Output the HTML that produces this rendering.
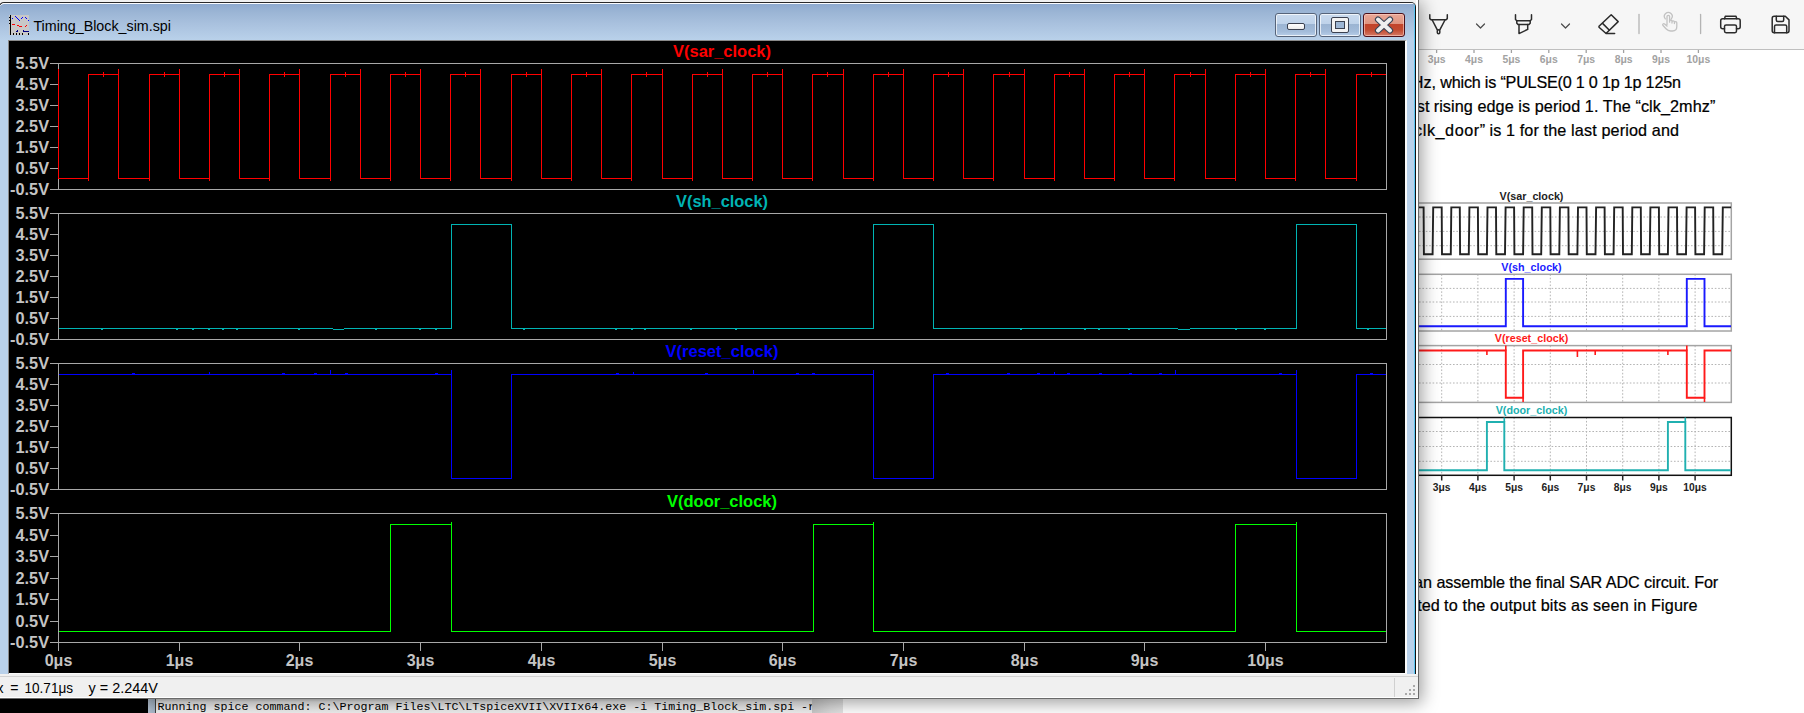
<!DOCTYPE html>
<html><head><meta charset="utf-8"><title>LTspice</title>
<style>
*{margin:0;padding:0;box-sizing:border-box}
html,body{width:1804px;height:713px;overflow:hidden;background:#fff;position:relative;font-family:"Liberation Sans",sans-serif}
.abs{position:absolute}
#tb{left:0;top:0;width:1804px;height:50px;background:#f6f6f6;border-bottom:1px solid #bfbfbf}
.ft{font:bold 10.75px "Liberation Sans",sans-serif;text-anchor:middle}
.fx{font:bold 10.3px "Liberation Sans",sans-serif;text-anchor:middle;fill:#1e1e1e}
.rl{font:bold 10.4px "Liberation Sans",sans-serif;fill:#a2a2a2;text-anchor:middle}
.dt{font:16.2px "Liberation Sans",sans-serif;fill:#000;stroke:#000;stroke-width:.22px}
.yl{font:bold 16.3px "Liberation Sans",sans-serif;fill:#c4c4c4;text-anchor:end}
.xl{font:bold 16px "Liberation Sans",sans-serif;fill:#c4c4c4;text-anchor:middle}
.tl{font:bold 16.7px "Liberation Sans",sans-serif;text-anchor:middle}
.btn{position:absolute;top:10px;width:42px;height:24px;border:1px solid #56647a;border-radius:3px;background:linear-gradient(#c9daee 0,#bfd3ea 44%,#9bb4d2 46%,#a3bcda 80%,#b7cee8 100%);box-shadow:inset 0 0 0 1px rgba(255,255,255,.7)}
#bclose{background:linear-gradient(#eaa897 0,#df9480 44%,#c2432a 46%,#c24a30 72%,#d57a66 100%);border-color:#4c1019;box-shadow:inset 0 0 0 1px rgba(255,210,200,.6)}
</style></head><body>
<div id="tb" class="abs"></div>
<svg class="abs" style="left:0;top:0" width="1804" height="50" viewBox="0 0 1804 50" fill="none" stroke="#2b2b2b" stroke-width="1.5" stroke-linecap="round" stroke-linejoin="round">
<path d="M1429.8 14.8V18.6L1431 19.8H1446.1L1447.3 18.6V14.8"/><path d="M1432.2 20L1437.3 29.8M1445 20L1439.8 29.8"/><rect x="1437.3" y="29.8" width="2.5" height="4" rx="1.2"/>
<path d="M1476.5 24L1480.5 28L1484.5 24" stroke="#4a4a4a" stroke-width="1.2"/>
<path d="M1515.5 14.8V19.5L1516.8 20.8H1530.2L1531.5 19.5V14.8"/><path d="M1516.8 20.8V23.3L1518.2 24.6H1528.8L1530.2 23.3V20.8"/><path d="M1519 24.6V33.6L1527.7 29.4V24.6"/>
<path d="M1561.5 24L1565.5 28L1569.5 24" stroke="#4a4a4a" stroke-width="1.2"/>
<path d="M1611.2 14.8L1618.2 21.6L1606.5 33L1605.5 33L1599 27.2L1599 26.3Z"/><path d="M1602.8 23.6L1609.4 30.2"/><path d="M1606 33.6H1614.6"/>
<path d="M1639 14.5V33.5" stroke="#b4b4b4" stroke-width="1.3"/>
<path d="M1700.6 14.5V33.5" stroke="#b4b4b4" stroke-width="1.3"/>
<g stroke="#c2c2c2" stroke-width="1.3"><path d="M1665.3 18.9A3.9 3.9 0 1 1 1671.3 18.9"/><path d="M1667 24.5V16.6A1.3 1.3 0 0 1 1669.6 16.6V22.2M1669.6 21.2A1.2 1.2 0 0 1 1672 21.2V23M1672 22A1.2 1.2 0 0 1 1674.4 22V23.5M1674.4 22.8A1.2 1.2 0 0 1 1676.8 22.8V26.5C1676.8 29.5 1675 31 1672.5 31H1670.5C1668.5 31 1667.3 30.2 1666 28.8L1662.8 25.2C1662.2 24.3 1663.5 23.2 1664.6 24L1667 26"/></g>
<path d="M1724.5 18.7L1725.3 16.2H1736L1736.8 18.7"/><path d="M1724.5 28.7H1722.7A2 2 0 0 1 1720.7 26.7V20.7A2 2 0 0 1 1722.7 18.7H1738.2A2 2 0 0 1 1740.2 20.7V26.7A2 2 0 0 1 1738.2 28.7H1736.5"/><rect x="1724.5" y="25" width="12" height="7.7" rx="1.6"/>
<path d="M1774.2 16.2H1785.3L1789 19.9V30.7A2 2 0 0 1 1787 32.7H1774.2A2 2 0 0 1 1772.2 30.7V18.2A2 2 0 0 1 1774.2 16.2Z"/><path d="M1776.3 16.2V20A1.5 1.5 0 0 0 1777.8 21.5H1782.2A1.5 1.5 0 0 0 1783.7 20V16.2"/><path d="M1774.5 32.7V26.5A1.5 1.5 0 0 1 1776 25H1785.2A1.5 1.5 0 0 1 1786.7 26.5V32.7"/>
</svg><svg class="abs" style="left:0;top:0" width="1804" height="713" viewBox="0 0 1804 713"><text class="dt" x="1436.0" y="87.9" text-anchor="end">Hz,</text><text class="dt" x="1440.3" y="87.9" textLength="240.7" lengthAdjust="spacing">which is “PULSE(0 1 0 1p 1p 125n</text><text class="dt" x="1429.4" y="111.6" text-anchor="end">st</text><text class="dt" x="1433.7" y="111.6" textLength="281.6" lengthAdjust="spacing">rising edge is period 1. The “clk_2mhz”</text><text class="dt" x="1414.1" y="135.5" textLength="71" lengthAdjust="spacing">clk_door”</text><text class="dt" x="1489.4" y="135.5" textLength="189.7" lengthAdjust="spacing">is 1 for the last period and</text><text class="dt" x="1432.1" y="587.5" text-anchor="end">an</text><text class="dt" x="1436.4" y="587.5" textLength="281.8" lengthAdjust="spacing">assemble the final SAR ADC circuit. For</text><text class="dt" x="1439.8" y="611.4" text-anchor="end">ted</text><text class="dt" x="1444.1" y="611.4" textLength="253.5" lengthAdjust="spacing">to the output bits as seen in Figure</text><path d="M1436.6 50V53" stroke="#a0a0a0" stroke-width="1.3"/><text class="rl" x="1436.6" y="63">3μs</text><path d="M1474.0 50V53" stroke="#a0a0a0" stroke-width="1.3"/><text class="rl" x="1474.0" y="63">4μs</text><path d="M1511.4 50V53" stroke="#a0a0a0" stroke-width="1.3"/><text class="rl" x="1511.4" y="63">5μs</text><path d="M1548.8 50V53" stroke="#a0a0a0" stroke-width="1.3"/><text class="rl" x="1548.8" y="63">6μs</text><path d="M1586.2 50V53" stroke="#a0a0a0" stroke-width="1.3"/><text class="rl" x="1586.2" y="63">7μs</text><path d="M1623.6 50V53" stroke="#a0a0a0" stroke-width="1.3"/><text class="rl" x="1623.6" y="63">8μs</text><path d="M1661.0 50V53" stroke="#a0a0a0" stroke-width="1.3"/><text class="rl" x="1661.0" y="63">9μs</text><path d="M1698.4 50V53" stroke="#a0a0a0" stroke-width="1.3"/><text class="rl" x="1698.4" y="63">10μs</text></svg><svg class="abs" style="left:0;top:0" width="1804" height="713" viewBox="0 0 1804 713"><path d="M1419 217.0H1731" stroke="#b4b4b4" stroke-dasharray="1.6 1.8"/><path d="M1419 231.4H1731" stroke="#b4b4b4" stroke-dasharray="1.6 1.8"/><path d="M1419 245.7H1731" stroke="#b4b4b4" stroke-dasharray="1.6 1.8"/><rect x="1380" y="203.0" width="351.3" height="56.2" fill="none" stroke="#a4a4a4" stroke-width="1.5"/><text x="1531.5" y="199.8" class="ft" fill="#222222">V(sar_clock)</text><path d="M1419 288.4H1731" stroke="#b4b4b4" stroke-dasharray="1.6 1.8"/><path d="M1419 302.0H1731" stroke="#b4b4b4" stroke-dasharray="1.6 1.8"/><path d="M1419 316.4H1731" stroke="#b4b4b4" stroke-dasharray="1.6 1.8"/><path d="M1441.7 274.3V331.0" stroke="#b4b4b4" stroke-dasharray="1.6 1.8"/><path d="M1477.9 274.3V331.0" stroke="#b4b4b4" stroke-dasharray="1.6 1.8"/><path d="M1514.1 274.3V331.0" stroke="#b4b4b4" stroke-dasharray="1.6 1.8"/><path d="M1550.3 274.3V331.0" stroke="#b4b4b4" stroke-dasharray="1.6 1.8"/><path d="M1586.5 274.3V331.0" stroke="#b4b4b4" stroke-dasharray="1.6 1.8"/><path d="M1622.7 274.3V331.0" stroke="#b4b4b4" stroke-dasharray="1.6 1.8"/><path d="M1658.9 274.3V331.0" stroke="#b4b4b4" stroke-dasharray="1.6 1.8"/><path d="M1695.1 274.3V331.0" stroke="#b4b4b4" stroke-dasharray="1.6 1.8"/><rect x="1380" y="274.3" width="351.3" height="56.7" fill="none" stroke="#a4a4a4" stroke-width="1.5"/><text x="1531.5" y="271.1" class="ft" fill="#1a1aff">V(sh_clock)</text><path d="M1419 364.5H1731" stroke="#b4b4b4" stroke-dasharray="1.6 1.8"/><path d="M1419 383.0H1731" stroke="#b4b4b4" stroke-dasharray="1.6 1.8"/><path d="M1441.7 345.6V402.4" stroke="#b4b4b4" stroke-dasharray="1.6 1.8"/><path d="M1477.9 345.6V402.4" stroke="#b4b4b4" stroke-dasharray="1.6 1.8"/><path d="M1514.1 345.6V402.4" stroke="#b4b4b4" stroke-dasharray="1.6 1.8"/><path d="M1550.3 345.6V402.4" stroke="#b4b4b4" stroke-dasharray="1.6 1.8"/><path d="M1586.5 345.6V402.4" stroke="#b4b4b4" stroke-dasharray="1.6 1.8"/><path d="M1622.7 345.6V402.4" stroke="#b4b4b4" stroke-dasharray="1.6 1.8"/><path d="M1658.9 345.6V402.4" stroke="#b4b4b4" stroke-dasharray="1.6 1.8"/><path d="M1695.1 345.6V402.4" stroke="#b4b4b4" stroke-dasharray="1.6 1.8"/><rect x="1380" y="345.6" width="351.3" height="56.8" fill="none" stroke="#a4a4a4" stroke-width="1.5"/><text x="1531.5" y="342.4" class="ft" fill="#ff1a1a">V(reset_clock)</text><path d="M1419 431.5H1731" stroke="#b4b4b4" stroke-dasharray="1.6 1.8"/><path d="M1419 446.5H1731" stroke="#b4b4b4" stroke-dasharray="1.6 1.8"/><path d="M1419 461.3H1731" stroke="#b4b4b4" stroke-dasharray="1.6 1.8"/><path d="M1441.7 417.5V475.3" stroke="#b4b4b4" stroke-dasharray="1.6 1.8"/><path d="M1477.9 417.5V475.3" stroke="#b4b4b4" stroke-dasharray="1.6 1.8"/><path d="M1514.1 417.5V475.3" stroke="#b4b4b4" stroke-dasharray="1.6 1.8"/><path d="M1550.3 417.5V475.3" stroke="#b4b4b4" stroke-dasharray="1.6 1.8"/><path d="M1586.5 417.5V475.3" stroke="#b4b4b4" stroke-dasharray="1.6 1.8"/><path d="M1622.7 417.5V475.3" stroke="#b4b4b4" stroke-dasharray="1.6 1.8"/><path d="M1658.9 417.5V475.3" stroke="#b4b4b4" stroke-dasharray="1.6 1.8"/><path d="M1695.1 417.5V475.3" stroke="#b4b4b4" stroke-dasharray="1.6 1.8"/><rect x="1380" y="417.5" width="351.3" height="57.8" fill="none" stroke="#111111" stroke-width="1.5"/><text x="1531.5" y="414.3" class="ft" fill="#20b0b0">V(door_clock)</text><path d="M1380 254.3L1324.0 254.3L1324.6 207.4L1333.1 207.4L1333.4 254.3L1342.1 254.3L1342.7 207.4L1351.2 207.4L1351.5 254.3L1360.2 254.3L1360.8 207.4L1369.3 207.4L1369.6 254.3L1378.3 254.3L1378.9 207.4L1387.4 207.4L1387.7 254.3L1396.4 254.3L1397.0 207.4L1405.5 207.4L1405.8 254.3L1414.5 254.3L1415.1 207.4L1423.6 207.4L1423.9 254.3L1432.6 254.3L1433.2 207.4L1441.7 207.4L1442.0 254.3L1450.8 254.3L1451.3 207.4L1459.8 207.4L1460.1 254.3L1468.8 254.3L1469.4 207.4L1477.9 207.4L1478.2 254.3L1486.9 254.3L1487.5 207.4L1496.0 207.4L1496.3 254.3L1505.0 254.3L1505.6 207.4L1514.1 207.4L1514.4 254.3L1523.1 254.3L1523.7 207.4L1532.2 207.4L1532.5 254.3L1541.2 254.3L1541.8 207.4L1550.3 207.4L1550.6 254.3L1559.3 254.3L1559.9 207.4L1568.4 207.4L1568.7 254.3L1577.4 254.3L1578.0 207.4L1586.5 207.4L1586.8 254.3L1595.5 254.3L1596.1 207.4L1604.6 207.4L1604.9 254.3L1613.6 254.3L1614.2 207.4L1622.7 207.4L1623.0 254.3L1631.8 254.3L1632.3 207.4L1640.8 207.4L1641.1 254.3L1649.8 254.3L1650.4 207.4L1658.9 207.4L1659.2 254.3L1667.9 254.3L1668.5 207.4L1677.0 207.4L1677.3 254.3L1686.0 254.3L1686.6 207.4L1695.1 207.4L1695.4 254.3L1704.1 254.3L1704.7 207.4L1713.2 207.4L1713.5 254.3L1722.2 254.3L1722.8 207.4L1731 207.4" stroke="#222" stroke-width="1.9" fill="none"/><path d="M1380 326.3L1505.8 326.3L1505.8 278.9L1523.1 278.9L1523.1 326.3L1686.8 326.3L1686.8 278.9L1704.5 278.9L1704.5 326.3L1731 326.3" stroke="#1a1aff" stroke-width="1.9" fill="none"/><path d="M1380 350.5L1505.8 350.5L1505.8 397.8L1523.1 397.8L1523.1 350.5L1686.8 350.5L1686.8 397.8L1704.5 397.8L1704.5 350.5L1731 350.5" stroke="#ff1a1a" stroke-width="1.9" fill="none"/><path d="M1505.8 350.5V345.5M1523.1 397.8V402M1686.8 350.5V345.5M1704.5 397.8V402M1486.9 350V355M1577.4 350V357M1595.2 350V355M1667.9 350V355" stroke="#ff1a1a" stroke-width="1.6"/><path d="M1380 470.3L1486.9 470.3L1486.9 422.0L1504.3 422.0L1504.3 470.3L1667.9 470.3L1667.9 422.0L1685.3 422.0L1685.3 470.3L1731 470.3" stroke="#20b0b0" stroke-width="1.9" fill="none"/><path d="M1504.3 422V417.5M1685.3 422V417.5" stroke="#20b0b0" stroke-width="1.6"/><path d="M1441.7 475V480.5" stroke="#222" stroke-width="1.5"/><text x="1441.7" y="491" class="fx">3μs</text><path d="M1477.9 475V480.5" stroke="#222" stroke-width="1.5"/><text x="1477.9" y="491" class="fx">4μs</text><path d="M1514.1 475V480.5" stroke="#222" stroke-width="1.5"/><text x="1514.1" y="491" class="fx">5μs</text><path d="M1550.3 475V480.5" stroke="#222" stroke-width="1.5"/><text x="1550.3" y="491" class="fx">6μs</text><path d="M1586.5 475V480.5" stroke="#222" stroke-width="1.5"/><text x="1586.5" y="491" class="fx">7μs</text><path d="M1622.7 475V480.5" stroke="#222" stroke-width="1.5"/><text x="1622.7" y="491" class="fx">8μs</text><path d="M1658.9 475V480.5" stroke="#222" stroke-width="1.5"/><text x="1658.9" y="491" class="fx">9μs</text><path d="M1695.1 475V480.5" stroke="#222" stroke-width="1.5"/><text x="1695.1" y="491" class="fx">10μs</text></svg>
<div class="abs" style="left:0;top:698px;width:148px;height:15px;background:#000"></div>
<div class="abs" style="left:148px;top:698px;width:8px;height:15px;background:linear-gradient(90deg,#b6c4d4,#a5b5c7);border-right:1px solid #404040"></div>
<div class="abs" style="left:156px;top:698px;width:656px;height:15px;background:linear-gradient(#c4c4c4,#ececec 4px,#f0f0f0)"></div>
<div class="abs" style="left:157.6px;top:701px;width:654px;overflow:hidden;font:11.67px 'Liberation Mono',monospace;line-height:13px;color:#000;white-space:pre">Running spice command: C:\Program Files\LTC\LTspiceXVII\XVIIx64.exe -i Timing_Block_sim.spi -r</div>
<div class="abs" style="left:812px;top:698px;width:31px;height:15px;background:linear-gradient(90deg,#c8c8c8,#dcdcdc 60%,#e4e4e4)"></div>
<!-- main LTspice window -->
<div class="abs" style="left:0;top:0;width:1419px;height:699px;background:#fff;border-right:1px solid #6a6a6a;border-bottom:1px solid #6a6a6a;box-shadow:2px 3px 16px 1px rgba(0,0,0,.38)"></div>
<div class="abs" style="left:0;top:0;width:1416px;height:675px;background:#f0f0f0;overflow:hidden">
 <div class="abs" style="left:0;top:2px;width:1416px;height:720px;background:#b9d1ea;border-top:1px solid #2a2a2a;border-right:1px solid #111;border-top-right-radius:5px;overflow:hidden">
  <div class="abs" style="left:0;top:0;width:1415px;height:37px;background:linear-gradient(#8eaacf 0,#9ab4d4 20%,#a9c1de 55%,#b9d1ea 100%);border-top:1px solid #fafcff"></div>
  <div class="abs" style="right:0;top:0;width:1px;height:720px;background:#5cc6f2"></div>
  <svg class="abs" style="left:9px;top:12px" width="20" height="20" viewBox="0 0 20 20" shape-rendering="crispEdges">
<rect width="20" height="20" fill="#c8c8c8"/><rect x="1" width="1" height="20" fill="#000"/>
<g fill="#000"><rect x="0" y="2" width="1" height="1"/><rect x="0" y="5" width="1" height="1"/><rect x="0" y="8" width="1" height="1"/>
<rect x="4" y="18" width="1" height="2"/><rect x="7" y="18" width="1" height="2"/><rect x="10" y="18" width="1" height="2"/><rect x="13" y="18" width="1" height="2"/><rect x="19" y="18" width="1" height="2"/></g>
<g fill="#0000ff"><rect x="3" y="3" width="1" height="1"/><rect x="6" y="1" width="1" height="1"/><rect x="7" y="2" width="1" height="1"/><rect x="8" y="3" width="1" height="1"/><rect x="9" y="4" width="1" height="1"/><rect x="10" y="5" width="1" height="1"/><rect x="12" y="3" width="1" height="1"/><rect x="13" y="2" width="1" height="1"/><rect x="16" y="2" width="1" height="1"/><rect x="17" y="3" width="1" height="1"/><rect x="19" y="5" width="1" height="1"/></g>
<g fill="#ff0000"><rect x="3" y="9" width="3" height="1"/><rect x="8" y="10" width="2" height="1"/><rect x="10" y="11" width="3" height="1"/><rect x="16" y="11" width="1" height="1"/><rect x="17" y="10" width="1" height="1"/></g>
<g fill="#000080"><rect x="7" y="16" width="2" height="1"/><rect x="8" y="15" width="1" height="1"/><rect x="14" y="15" width="1" height="1"/><rect x="14" y="16" width="6" height="1"/></g>
</svg>
  <svg class="abs" style="left:0;top:0" width="300" height="37" viewBox="0 3 300 37"><text x="33.4" y="31" textLength="137.6" lengthAdjust="spacingAndGlyphs" style="font:14.3px 'Liberation Sans',sans-serif;fill:#000">Timing_Block_sim.spi</text></svg>
  <div class="btn" style="left:1275px"><div class="abs" style="left:11px;top:9px;width:18px;height:7px;background:linear-gradient(#fff,#ececec);border:1px solid #3b4150;border-radius:2px"></div></div>
  <div class="btn" style="left:1319px"><div class="abs" style="left:11px;top:3px;width:18px;height:16px;border:1px solid #3b4150;border-radius:2px;background:#f3f3f3"><div class="abs" style="left:3px;top:3px;width:10px;height:8px;background:#9db6d4;border:1px solid #3b4150"></div></div></div>
  <div class="btn" id="bclose" style="left:1363px"><svg class="abs" style="left:10px;top:2px" width="20" height="18" viewBox="0 0 20 18"><path d="M4 3.5L16 14.5M16 3.5L4 14.5" stroke="#3b4658" stroke-width="6.2" stroke-linecap="round"/><path d="M4 3.5L16 14.5M16 3.5L4 14.5" stroke="#efefef" stroke-width="4" stroke-linecap="round"/></svg></div>
  <div class="abs" style="left:8px;top:37px;width:1399px;height:635px;background:#000;border-left:1px solid #8a8a8a;border-top:1px solid #8a8a8a;border-right:2px solid #fafafa;border-bottom:2px solid #fafafa"><svg class="abs" style="left:0;top:0" width="1396" height="631" viewBox="9 41 1396 631" shape-rendering="crispEdges"><path d="M58.5 63.5H1386.5V189.5H58.5Z" fill="none" stroke="#a8a8a8"/><path d="M50 63.5H58" stroke="#a8a8a8"/><text x="49" y="69.0" class="yl">5.5V</text><path d="M50 84.5H58" stroke="#a8a8a8"/><text x="49" y="90.0" class="yl">4.5V</text><path d="M50 105.5H58" stroke="#a8a8a8"/><text x="49" y="111.0" class="yl">3.5V</text><path d="M50 126.5H58" stroke="#a8a8a8"/><text x="49" y="132.0" class="yl">2.5V</text><path d="M50 147.5H58" stroke="#a8a8a8"/><text x="49" y="153.0" class="yl">1.5V</text><path d="M50 168.5H58" stroke="#a8a8a8"/><text x="49" y="174.0" class="yl">0.5V</text><path d="M50 189.5H58" stroke="#a8a8a8"/><text x="49" y="195.0" class="yl">-0.5V</text><path d="M58.5 213.5H1386.5V339.5H58.5Z" fill="none" stroke="#a8a8a8"/><path d="M50 213.5H58" stroke="#a8a8a8"/><text x="49" y="219.0" class="yl">5.5V</text><path d="M50 234.5H58" stroke="#a8a8a8"/><text x="49" y="240.0" class="yl">4.5V</text><path d="M50 255.5H58" stroke="#a8a8a8"/><text x="49" y="261.0" class="yl">3.5V</text><path d="M50 276.5H58" stroke="#a8a8a8"/><text x="49" y="282.0" class="yl">2.5V</text><path d="M50 297.5H58" stroke="#a8a8a8"/><text x="49" y="303.0" class="yl">1.5V</text><path d="M50 318.5H58" stroke="#a8a8a8"/><text x="49" y="324.0" class="yl">0.5V</text><path d="M50 339.5H58" stroke="#a8a8a8"/><text x="49" y="345.0" class="yl">-0.5V</text><path d="M58.5 363.5H1386.5V489.5H58.5Z" fill="none" stroke="#a8a8a8"/><path d="M50 363.5H58" stroke="#a8a8a8"/><text x="49" y="369.0" class="yl">5.5V</text><path d="M50 384.5H58" stroke="#a8a8a8"/><text x="49" y="390.0" class="yl">4.5V</text><path d="M50 405.5H58" stroke="#a8a8a8"/><text x="49" y="411.0" class="yl">3.5V</text><path d="M50 426.5H58" stroke="#a8a8a8"/><text x="49" y="432.0" class="yl">2.5V</text><path d="M50 447.5H58" stroke="#a8a8a8"/><text x="49" y="453.0" class="yl">1.5V</text><path d="M50 468.5H58" stroke="#a8a8a8"/><text x="49" y="474.0" class="yl">0.5V</text><path d="M50 489.5H58" stroke="#a8a8a8"/><text x="49" y="495.0" class="yl">-0.5V</text><path d="M58.5 513.5H1386.5V642.5H58.5Z" fill="none" stroke="#a8a8a8"/><path d="M50 513.5H58" stroke="#a8a8a8"/><text x="49" y="519.0" class="yl">5.5V</text><path d="M50 535.5H58" stroke="#a8a8a8"/><text x="49" y="541.0" class="yl">4.5V</text><path d="M50 556.5H58" stroke="#a8a8a8"/><text x="49" y="562.0" class="yl">3.5V</text><path d="M50 578.5H58" stroke="#a8a8a8"/><text x="49" y="584.0" class="yl">2.5V</text><path d="M50 599.5H58" stroke="#a8a8a8"/><text x="49" y="605.0" class="yl">1.5V</text><path d="M50 621.5H58" stroke="#a8a8a8"/><text x="49" y="627.0" class="yl">0.5V</text><path d="M50 642.5H58" stroke="#a8a8a8"/><text x="49" y="648.0" class="yl">-0.5V</text><path d="M58.5 642V651" stroke="#a8a8a8"/><text x="58.5" y="666" class="xl">0μs</text><path d="M179.5 642V651" stroke="#a8a8a8"/><text x="179.5" y="666" class="xl">1μs</text><path d="M299.5 642V651" stroke="#a8a8a8"/><text x="299.5" y="666" class="xl">2μs</text><path d="M420.5 642V651" stroke="#a8a8a8"/><text x="420.5" y="666" class="xl">3μs</text><path d="M541.5 642V651" stroke="#a8a8a8"/><text x="541.5" y="666" class="xl">4μs</text><path d="M662.5 642V651" stroke="#a8a8a8"/><text x="662.5" y="666" class="xl">5μs</text><path d="M782.5 642V651" stroke="#a8a8a8"/><text x="782.5" y="666" class="xl">6μs</text><path d="M903.5 642V651" stroke="#a8a8a8"/><text x="903.5" y="666" class="xl">7μs</text><path d="M1024.5 642V651" stroke="#a8a8a8"/><text x="1024.5" y="666" class="xl">8μs</text><path d="M1144.5 642V651" stroke="#a8a8a8"/><text x="1144.5" y="666" class="xl">9μs</text><path d="M1265.5 642V651" stroke="#a8a8a8"/><text x="1265.5" y="666" class="xl">10μs</text><text x="722" y="57" class="tl" fill="#ff0000" textLength="98" lengthAdjust="spacingAndGlyphs">V(sar_clock)</text><text x="722" y="207" class="tl" fill="#00b4b4" textLength="92" lengthAdjust="spacingAndGlyphs">V(sh_clock)</text><text x="722" y="357" class="tl" fill="#0000ff" textLength="113" lengthAdjust="spacingAndGlyphs">V(reset_clock)</text><text x="722" y="507" class="tl" fill="#00ff00" textLength="110" lengthAdjust="spacingAndGlyphs">V(door_clock)</text><path d="M58.5 68.5L58.5 178.5L88.5 178.5L88.5 180.5L88.5 74.5L118.5 74.5L118.5 68.5L118.5 178.5L149.5 178.5L149.5 180.5L149.5 74.5L179.5 74.5L179.5 68.5L179.5 178.5L209.5 178.5L209.5 180.5L209.5 74.5L239.5 74.5L239.5 68.5L239.5 178.5L269.5 178.5L269.5 180.5L269.5 74.5L299.5 74.5L299.5 68.5L299.5 178.5L330.5 178.5L330.5 180.5L330.5 74.5L360.5 74.5L360.5 68.5L360.5 178.5L390.5 178.5L390.5 180.5L390.5 74.5L420.5 74.5L420.5 68.5L420.5 178.5L450.5 178.5L450.5 180.5L450.5 74.5L480.5 74.5L480.5 68.5L480.5 178.5L511.5 178.5L511.5 180.5L511.5 74.5L541.5 74.5L541.5 68.5L541.5 178.5L571.5 178.5L571.5 180.5L571.5 74.5L601.5 74.5L601.5 68.5L601.5 178.5L631.5 178.5L631.5 180.5L631.5 74.5L662.5 74.5L662.5 68.5L662.5 178.5L692.5 178.5L692.5 180.5L692.5 74.5L722.5 74.5L722.5 68.5L722.5 178.5L752.5 178.5L752.5 180.5L752.5 74.5L782.5 74.5L782.5 68.5L782.5 178.5L812.5 178.5L812.5 180.5L812.5 74.5L843.5 74.5L843.5 68.5L843.5 178.5L873.5 178.5L873.5 180.5L873.5 74.5L903.5 74.5L903.5 68.5L903.5 178.5L933.5 178.5L933.5 180.5L933.5 74.5L963.5 74.5L963.5 68.5L963.5 178.5L993.5 178.5L993.5 180.5L993.5 74.5L1024.5 74.5L1024.5 68.5L1024.5 178.5L1054.5 178.5L1054.5 180.5L1054.5 74.5L1084.5 74.5L1084.5 68.5L1084.5 178.5L1114.5 178.5L1114.5 180.5L1114.5 74.5L1144.5 74.5L1144.5 68.5L1144.5 178.5L1174.5 178.5L1174.5 180.5L1174.5 74.5L1205.5 74.5L1205.5 68.5L1205.5 178.5L1235.5 178.5L1235.5 180.5L1235.5 74.5L1265.5 74.5L1265.5 68.5L1265.5 178.5L1295.5 178.5L1295.5 180.5L1295.5 74.5L1325.5 74.5L1325.5 68.5L1325.5 178.5L1356.5 178.5L1356.5 180.5L1356.5 74.5L1385.5 74.5" stroke="#ff0000" fill="none"/><path d="M103.5 72V77M164.5 72V77M224.5 72V77M284.5 72V77M345.5 72V77M405.5 72V77M465.5 72V77M526.5 72V77M586.5 72V77M646.5 72V77M707.5 72V77M767.5 72V77M827.5 72V77M888.5 72V77M948.5 72V77M1009.5 72V77M1069.5 72V77M1129.5 72V77M1190.5 72V77M1250.5 72V77M1310.5 72V77M1371.5 72V77" stroke="#ff0000" fill="none"/><path d="M58.5 328.5L451.5 328.5L451.5 224.5L511.5 224.5L511.5 328.5L873.5 328.5L873.5 224.5L933.5 224.5L933.5 328.5L1296.5 328.5L1296.5 224.5L1356.5 224.5L1356.5 328.5L1385.5 328.5" stroke="#00b4b4" fill="none"/><path d="M58.5 374.5L451.5 374.5L451.5 478.5L511.5 478.5L511.5 374.5L873.5 374.5L873.5 478.5L933.5 478.5L933.5 374.5L1296.5 374.5L1296.5 478.5L1356.5 478.5L1356.5 374.5L1385.5 374.5" stroke="#0000ff" fill="none"/><path d="M58.5 631.5L390.5 631.5L390.5 524.5L451.5 524.5L451.5 631.5L813.5 631.5L813.5 524.5L873.5 524.5L873.5 631.5L1235.5 631.5L1235.5 524.5L1296.5 524.5L1296.5 631.5L1385.5 631.5" stroke="#00ff00" fill="none"/><path d="M451.5 370V374M873.5 370V374M1296.5 370V374" stroke="#0000ff" fill="none"/><path d="M451.5 522V524M873.5 522V524M1296.5 522V524" stroke="#00ff00" fill="none"/><path d="M101 329.5h2M176 329.5h2M192 329.5h2M208 329.5h2M222 329.5h2M236 329.5h2M298 329.5h2M375 329.5h2M419 329.5h2M435 329.5h2M523 329.5h2M615 329.5h2M631 329.5h2M644 329.5h2M690 329.5h2M735 329.5h2M1020 329.5h2M1084 329.5h2M1098 329.5h2M1128 329.5h2M1235 329.5h2M1264 329.5h2M1367 329.5h2M333 329.5H344M1178 329.5H1190" stroke="#00b4b4" fill="none"/><path d="M333 328.5H344M1178 328.5H1190" stroke="#000" fill="none"/><path d="M132 373.5h3M282 373.5h3M314 373.5h3M345 373.5h3M435 373.5h3M616 373.5h3M705 373.5h3M796 373.5h3M812 373.5h3M946 373.5h3M1007 373.5h3M1037 373.5h3M1067 373.5h3M1099 373.5h3M1129 373.5h3M1159 373.5h3M1279 373.5h3M1370 373.5h3M209.5 372V374M633.5 372V374M1054.5 372V374M330.5 370V374M753.5 370V374M1175.5 370V374" stroke="#0000ff" fill="none"/></svg></div>
 </div>
</div>
<svg class="abs" style="left:0;top:0" width="8" height="8" viewBox="0 0 8 8"><path d="M0 0H4V2.2C2.2 2.4 0.8 3.2 0 4.6Z" fill="#f0f0f0"/><path d="M4 2.5C2.2 2.7 0.8 3.4 0 4.8" stroke="#2e2e2e" stroke-width="1.2" fill="none"/><path d="M4 3.5C2.4 3.7 1.2 4.4 0.4 5.6" stroke="#ffffff" stroke-width="1" fill="none"/></svg>
<div class="abs" style="left:0;top:674px;width:1418px;height:24px;background:#f0f0f0;border-top:1px solid #f0f0f0;border-bottom:1px solid #fff">
 <div class="abs" style="left:0;top:1px;width:1418px;height:1px;background:#d2d2d2"></div>
 <div class="abs" style="left:1394px;top:3px;width:1px;height:19px;background:#d0d0d0"></div>
 <svg class="abs" style="left:1405px;top:10px" width="12" height="12" viewBox="0 0 12 12" shape-rendering="crispEdges" fill="#a9a9a9"><rect x="8" y="0" width="2" height="2"/><rect x="4" y="4" width="2" height="2"/><rect x="8" y="4" width="2" height="2"/><rect x="0" y="8" width="2" height="2"/><rect x="4" y="8" width="2" height="2"/><rect x="8" y="8" width="2" height="2"/></svg>
</div>
<svg class="abs" style="left:0;top:674px" width="200" height="24" viewBox="0 674 200 24">
<text x="18.6" y="693.4" text-anchor="end" textLength="22" lengthAdjust="spacing" style="font:14.1px 'Liberation Sans',sans-serif">x =</text>
<text x="24.5" y="693.4" textLength="48.5" lengthAdjust="spacingAndGlyphs" style="font:14.1px 'Liberation Sans',sans-serif">10.71μs</text>
<text x="88.6" y="693.4" textLength="69.3" lengthAdjust="spacingAndGlyphs" style="font:14.1px 'Liberation Sans',sans-serif">y = 2.244V</text>
</svg>
</body></html>
